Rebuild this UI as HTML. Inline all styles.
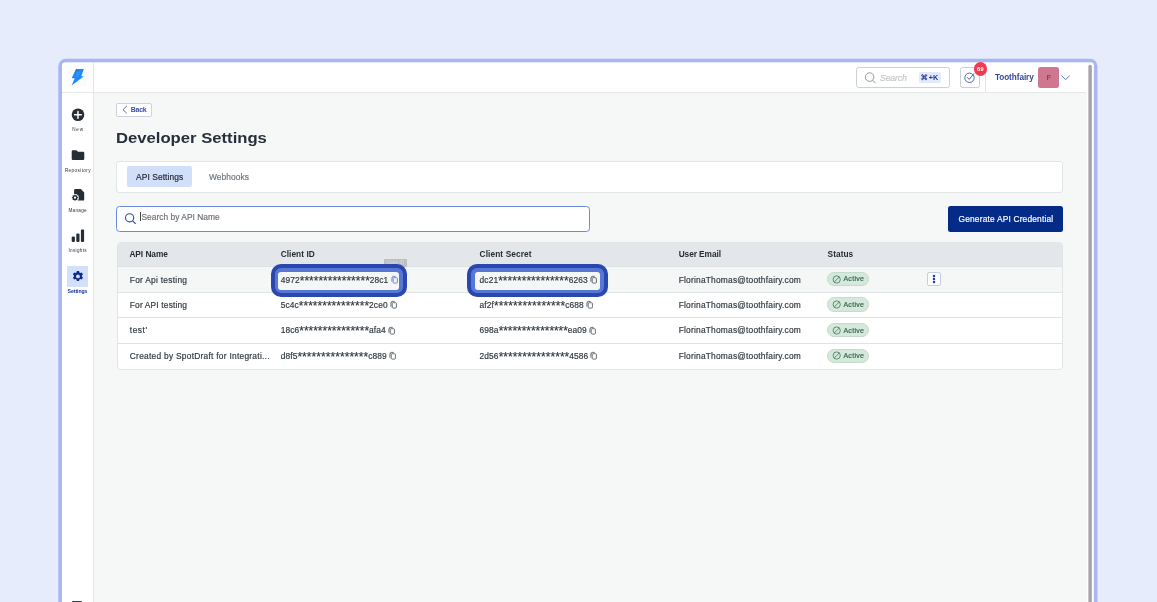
<!DOCTYPE html>
<html><head><meta charset="utf-8">
<style>
*{box-sizing:border-box;margin:0;padding:0}
html,body{width:1157px;height:602px;overflow:hidden}
body{background:#e7ecfc;font-family:"Liberation Sans",sans-serif;position:relative;color:#2a323a}
#app{position:absolute;left:0;top:0;width:1157px;height:602px;will-change:transform}
.b{position:absolute}
.t{position:absolute;white-space:nowrap;line-height:1;-webkit-text-stroke:0.18px currentColor}
svg{position:absolute;overflow:visible}
</style></head><body>
<svg style="left:0;top:0" width="1157" height="602" viewBox="0 0 1157 602"><path fill="#a8b8ec" fill-rule="evenodd" d="M58.3 610V66.3a7.5 7.5 0 0 1 7.5-7.5H1090a7.5 7.5 0 0 1 7.5 7.5V610z M62 610V66a3.4 3.4 0 0 1 3.4-3.4H1091.2a2.5 2.5 0 0 1 2.5 2.5V610z"/><path fill="#fff" d="M62 610V66a3.4 3.4 0 0 1 3.4-3.4H1091.2a2.5 2.5 0 0 1 2.5 2.5V610z"/></svg>
<div id="app">
<!-- content bg -->
<div class="b" style="left:94px;top:93px;width:993px;height:520px;background:#f6f8f8"></div>
<div class="b" style="left:93px;top:62px;width:1px;height:540px;background:#e3e6e7"></div>
<div class="b" style="left:62px;top:92px;width:1024px;height:1px;background:#e6e9ea"></div>
<!-- scrollbar -->
<svg style="left:0;top:0" width="1157" height="602" viewBox="0 0 1157 602"><rect x="1088.35" y="64.8" width="3.5" height="560" rx="1.75" fill="#a6a6a6"/></svg>

<!-- logo -->
<div class="b" style="left:68px;top:69px;width:19px;height:17px;background:#fbfbfc"></div>
<svg style="left:70px;top:68px" width="16" height="19" viewBox="70 68 16 19"><path d="M76.7 69.1 L83.9 69.1 L81.2 76.2 L83.9 76.2 L71.6 85.6 L74.8 78.3 L71.7 78.3 L75.3 70.4 Z" fill="#1889fd"/><path d="M75.3 70.4 L76.7 69.1 L76.9 70.6Z" fill="#1a4f93"/><path d="M76.9 72.3h3.6M76.2 74.3h3.7M75.6 76.2h3.4" stroke="#4ea6ff" stroke-width="0.7"/></svg>

<!-- sidebar: New -->
<svg style="left:71px;top:108px" width="14" height="14" viewBox="71 108 14 14"><circle cx="78" cy="114.8" r="6.3" fill="#262d35"/><path d="M78 111.4v6.8M74.6 114.8h6.8" stroke="#fff" stroke-width="1.5" stroke-linecap="round"/></svg>
<!-- Repository folder -->
<svg style="left:71px;top:149px" width="14" height="12" viewBox="71 149 14 12"><path d="M72.9 150.2h3.6l1.4 1.5h5.2a1.2 1.2 0 0 1 1.2 1.2v5.9a1.2 1.2 0 0 1-1.2 1.2h-10.2a1.2 1.2 0 0 1-1.2-1.2v-7.4a1.2 1.2 0 0 1 1.2-1.2z" fill="#262d35"/></svg>
<!-- Manage -->
<svg style="left:71px;top:188px" width="14" height="14" viewBox="71 188 14 14"><path d="M75.3 189h5.5l3.4 3.4v7a1.2 1.2 0 0 1-1.2 1.2h-7.7a1.2 1.2 0 0 1-1.2-1.2v-9.2a1.2 1.2 0 0 1 1.2-1.2z" fill="#262d35"/><g transform="translate(75 197.7)"><circle r="3.8" fill="#fff"/><path d="M0-3.4L0.9-2.2L2.4-2.4L2.2-0.9L3.4 0L2.2 0.9L2.4 2.4L0.9 2.2L0 3.4L-0.9 2.2L-2.4 2.4L-2.2 0.9L-3.4 0L-2.2-0.9L-2.4-2.4L-0.9-2.2Z" fill="#262d35"/><circle r="1.15" fill="#fff"/></g></svg>
<!-- Insights -->
<svg style="left:71px;top:229px" width="14" height="14" viewBox="71 229 14 14"><rect x="71.7" y="236.5" width="3.2" height="5.4" rx="1" fill="#262d35"/><rect x="76.3" y="233.4" width="3.2" height="8.5" rx="1" fill="#262d35"/><rect x="80.9" y="229.4" width="3.2" height="12.5" rx="1" fill="#262d35"/></svg>
<!-- Settings -->
<div class="b" style="left:67px;top:266.4px;width:21.3px;height:20.6px;background:#d4e0fb"></div>
<svg style="left:72px;top:270px" width="12" height="12" viewBox="-6 -6 12 12"><g transform="translate(-0.05 0.45)"><path id="gear" fill="#0b2a90" d="M-1.1-5.5h2.2l.35 1.5 1 .55 1.45-.5 1.1 1.9-1.1 1v1.1l1.1 1-1.1 1.9-1.45-.5-1 .55-.35 1.5h-2.2l-.35-1.5-1-.55-1.45.5-1.1-1.9 1.1-1v-1.1l-1.1-1 1.1-1.9 1.45.5 1-.55z"/><circle r="1.9" fill="#d4e0fb"/></g></svg>
<!-- bottom icon peek -->
<div class="b" style="left:71.5px;top:600.6px;width:10px;height:3px;background:#3a4148;border-radius:1px"></div>

<!-- topbar search -->
<div class="b" style="left:856px;top:67px;width:94px;height:21px;border:1px solid #ccd1d5;border-radius:2.5px;background:#fff"></div>
<svg style="left:864px;top:71px" width="14" height="14" viewBox="864 71 14 14"><circle cx="869.6" cy="77.1" r="4.3" fill="none" stroke="#878f96" stroke-width="0.9"/><path d="M872.7 80.3l2.6 2.6" stroke="#878f96" stroke-width="0.9" stroke-linecap="round"/></svg>
<div class="b" style="left:919px;top:71.5px;width:22px;height:11.8px;background:#e3eafc;border-radius:2px"></div>
<svg style="left:921px;top:74.4px" width="6.4" height="6.4" viewBox="0 0 12 12"><path d="M4.2 4.2h3.6v3.6h-3.6zM4.2 4.2H2.7A1.5 1.5 0 1 1 4.2 2.7zM7.8 4.2V2.7A1.5 1.5 0 1 1 9.3 4.2zM7.8 7.8h1.5A1.5 1.5 0 1 1 7.8 9.3zM4.2 7.8v1.5A1.5 1.5 0 1 1 2.7 7.8z" fill="none" stroke="#1f3590" stroke-width="1.75"/></svg>
<!-- notif -->
<div class="b" style="left:960px;top:67px;width:20px;height:21px;border:1px solid #c9ced3;border-radius:2.5px;background:#fff"></div>
<svg style="left:963px;top:71px" width="14" height="14" viewBox="963 71 14 14"><circle cx="969.5" cy="77.8" r="4.7" fill="none" stroke="#3f57a6" stroke-width="0.9"/><path d="M967.3 77.4l1.9 2 4.6-5.6" fill="none" stroke="#3f57a6" stroke-width="0.9" stroke-linecap="round" stroke-linejoin="round"/></svg>
<div class="b" style="left:985px;top:62px;width:1px;height:30px;background:#e3e6e8"></div>
<div class="b" style="left:973.5px;top:62.4px;width:13.4px;height:13.4px;border-radius:7px;background:#ef3b4f"></div>
<!-- avatar -->
<div class="b" style="left:1038.2px;top:67.1px;width:21px;height:20.5px;border-radius:2.5px;background:#cf7690"></div>
<svg style="left:1061px;top:74px" width="10" height="7" viewBox="1061 74 10 7"><path d="M1061.8 76l3.8 3.6 3.8-3.6" fill="none" stroke="#4a62b0" stroke-width="0.9" stroke-linecap="round" stroke-linejoin="round"/></svg>

<!-- back button -->
<div class="b" style="left:116.3px;top:103px;width:35.4px;height:13.5px;border:1px solid #ccd2e3;border-radius:2px;background:#fff"></div>
<svg style="left:122px;top:105px" width="6" height="9" viewBox="122 105 6 9"><path d="M126.6 106.2l-3.6 3.5 3.6 3.5" fill="none" stroke="#3a4fa0" stroke-width="0.8" stroke-linecap="round" stroke-linejoin="round"/></svg>

<!-- tabs -->
<div class="b" style="left:116.3px;top:160.7px;width:947px;height:32.2px;border:1px solid #e2e5e6;border-radius:3px;background:#fff"></div>
<div class="b" style="left:126.6px;top:166.2px;width:65.4px;height:20.7px;border-radius:2px;background:#d2dffb"></div>

<!-- search input -->
<div class="b" style="left:116.3px;top:205.8px;width:473.5px;height:25.8px;border:1px solid #6c8be0;border-radius:3.5px;background:#fff"></div>
<svg style="left:124px;top:212px" width="13" height="13" viewBox="124 212 13 13"><circle cx="129.6" cy="217.8" r="4.1" fill="none" stroke="#3550a4" stroke-width="1.1"/><path d="M132.6 220.9l2.7 2.6" stroke="#3550a4" stroke-width="1.1" stroke-linecap="round"/></svg>
<div class="b" style="left:140px;top:212.3px;width:0.8px;height:9px;background:#444"></div>

<!-- generate button -->
<div class="b" style="left:948.4px;top:205.8px;width:115px;height:26px;border-radius:2.5px;background:#042b88"></div>

<!-- table -->
<div class="b" style="left:116.8px;top:241.6px;width:946.4px;height:128.1px;border:1px solid #e2e5e6;border-radius:4px;background:#fff;overflow:hidden">
  <div class="b" style="left:0;top:0;width:946px;height:23.9px;background:#e4e7ea"></div>
  <div class="b" style="left:0;top:23.9px;width:946px;height:1px;background:#e0e3e6"></div>
  <div class="b" style="left:0;top:24.9px;width:946px;height:24.3px;background:#f5f7f7"></div>
  <div class="b" style="left:0;top:49.2px;width:946px;height:1px;background:#e0e3e5"></div>
  <div class="b" style="left:0;top:74.9px;width:946px;height:1px;background:#e0e3e5"></div>
  <div class="b" style="left:0;top:100.2px;width:946px;height:1px;background:#e0e3e5"></div>
</div>

<!-- tooltip remnant -->
<div class="b" style="left:384.1px;top:259.2px;width:23px;height:8px;background:#bbbfc2;border-radius:1px;overflow:hidden"><span class="t" style="left:2.4px;top:1.6px;font-size:4.6px;color:#d2d5d7;letter-spacing:0.2px">Copy ID</span></div>

<!-- highlight boxes -->
<div class="b" style="left:271.2px;top:263.9px;width:135.8px;height:32.9px;border:4.1px solid #2a47af;border-radius:10px;background:#5777d5"></div>
<div class="b" style="left:278.4px;top:271.9px;width:120.7px;height:17.8px;border-radius:3px;background:#f5f7f7"></div>
<div class="b" style="left:467.4px;top:263.9px;width:140.6px;height:32.9px;border:4.1px solid #2a47af;border-radius:10px;background:#5777d5"></div>
<div class="b" style="left:474.8px;top:271.9px;width:125.7px;height:17.8px;border-radius:3px;background:#f5f7f7"></div>

<!-- copy icons -->
<svg style="left:391.1px;top:275.9px" width="7" height="8" viewBox="0 0 7 8"><g fill="none" stroke="#5878d6" stroke-width="0.85"><path d="M1.4 1.9V1.1a.7.7 0 0 1 .7-.7h2.6"/><rect x="2.2" y="1.7" width="4.2" height="5.4" rx="0.9"/><path d="M0.9 1.5v4.2"/></g></svg>
<svg style="left:590.0px;top:275.9px" width="7" height="8" viewBox="0 0 7 8"><g fill="none" stroke="#4f575d" stroke-width="0.85"><path d="M1.4 1.9V1.1a.7.7 0 0 1 .7-.7h2.6"/><rect x="2.2" y="1.7" width="4.2" height="5.4" rx="0.9"/><path d="M0.9 1.5v4.2"/></g></svg>
<svg style="left:390.4px;top:301.2px" width="7" height="8" viewBox="0 0 7 8"><g fill="none" stroke="#4f575d" stroke-width="0.85"><path d="M1.4 1.9V1.1a.7.7 0 0 1 .7-.7h2.6"/><rect x="2.2" y="1.7" width="4.2" height="5.4" rx="0.9"/><path d="M0.9 1.5v4.2"/></g></svg>
<svg style="left:586.2px;top:301.2px" width="7" height="8" viewBox="0 0 7 8"><g fill="none" stroke="#4f575d" stroke-width="0.85"><path d="M1.4 1.9V1.1a.7.7 0 0 1 .7-.7h2.6"/><rect x="2.2" y="1.7" width="4.2" height="5.4" rx="0.9"/><path d="M0.9 1.5v4.2"/></g></svg>
<svg style="left:388.3px;top:326.8px" width="7" height="8" viewBox="0 0 7 8"><g fill="none" stroke="#4f575d" stroke-width="0.85"><path d="M1.4 1.9V1.1a.7.7 0 0 1 .7-.7h2.6"/><rect x="2.2" y="1.7" width="4.2" height="5.4" rx="0.9"/><path d="M0.9 1.5v4.2"/></g></svg>
<svg style="left:589.1px;top:326.8px" width="7" height="8" viewBox="0 0 7 8"><g fill="none" stroke="#4f575d" stroke-width="0.85"><path d="M1.4 1.9V1.1a.7.7 0 0 1 .7-.7h2.6"/><rect x="2.2" y="1.7" width="4.2" height="5.4" rx="0.9"/><path d="M0.9 1.5v4.2"/></g></svg>
<svg style="left:389.4px;top:352.4px" width="7" height="8" viewBox="0 0 7 8"><g fill="none" stroke="#4f575d" stroke-width="0.85"><path d="M1.4 1.9V1.1a.7.7 0 0 1 .7-.7h2.6"/><rect x="2.2" y="1.7" width="4.2" height="5.4" rx="0.9"/><path d="M0.9 1.5v4.2"/></g></svg>
<svg style="left:590.3px;top:352.4px" width="7" height="8" viewBox="0 0 7 8"><g fill="none" stroke="#4f575d" stroke-width="0.85"><path d="M1.4 1.9V1.1a.7.7 0 0 1 .7-.7h2.6"/><rect x="2.2" y="1.7" width="4.2" height="5.4" rx="0.9"/><path d="M0.9 1.5v4.2"/></g></svg>

<!-- status badges -->
<div class="b" style="left:827.1px;top:272.1px;width:42.3px;height:14.4px;border-radius:7.2px;background:#d4e8db;border:0.6px solid #c4dccb"></div>
<svg style="left:832px;top:275.0px" width="9" height="9" viewBox="-4.5 -4.5 9 9"><circle cx="0.2" cy="0" r="3.6" fill="none" stroke="#3b6a4e" stroke-width="0.75"/><path d="M-2.2 2.4L2.7-2.4" stroke="#3b6a4e" stroke-width="0.75"/></svg>
<div class="b" style="left:827.1px;top:297.3px;width:42.3px;height:14.4px;border-radius:7.2px;background:#d4e8db;border:0.6px solid #c4dccb"></div>
<svg style="left:832px;top:300.2px" width="9" height="9" viewBox="-4.5 -4.5 9 9"><circle cx="0.2" cy="0" r="3.6" fill="none" stroke="#3b6a4e" stroke-width="0.75"/><path d="M-2.2 2.4L2.7-2.4" stroke="#3b6a4e" stroke-width="0.75"/></svg>
<div class="b" style="left:827.1px;top:322.9px;width:42.3px;height:14.4px;border-radius:7.2px;background:#d4e8db;border:0.6px solid #c4dccb"></div>
<svg style="left:832px;top:325.8px" width="9" height="9" viewBox="-4.5 -4.5 9 9"><circle cx="0.2" cy="0" r="3.6" fill="none" stroke="#3b6a4e" stroke-width="0.75"/><path d="M-2.2 2.4L2.7-2.4" stroke="#3b6a4e" stroke-width="0.75"/></svg>
<div class="b" style="left:827.1px;top:348.5px;width:42.3px;height:14.4px;border-radius:7.2px;background:#d4e8db;border:0.6px solid #c4dccb"></div>
<svg style="left:832px;top:351.4px" width="9" height="9" viewBox="-4.5 -4.5 9 9"><circle cx="0.2" cy="0" r="3.6" fill="none" stroke="#3b6a4e" stroke-width="0.75"/><path d="M-2.2 2.4L2.7-2.4" stroke="#3b6a4e" stroke-width="0.75"/></svg>

<!-- kebab -->
<div class="b" style="left:926.7px;top:272.1px;width:14px;height:13.8px;border:1px solid #c8cee0;border-radius:2px;background:#fff"></div>

<span class="t" style="left:116.3px;top:131.05px;font-size:16px;font-weight:700;color:#27303a;-webkit-text-stroke:0;transform-origin:0 0;transform:scale(1.041,0.92)">Developer Settings</span>
<svg style="left:930px;top:273px" width="8" height="12" viewBox="930 273 8 12"><circle cx="934" cy="276.1" r="1.25" fill="#1f3aa0"/><circle cx="934" cy="279.05" r="1.25" fill="#1f3aa0"/><circle cx="934" cy="282" r="1.25" fill="#1f3aa0"/></svg>
<span class="t" style="left:880.00px;top:74.00px;font-size:8.8px;font-weight:400;color:#c2c7cb;letter-spacing:-0.215px;font-style:italic;">Search</span>
<span class="t" style="left:928.80px;top:74.00px;font-size:7.2px;font-weight:700;color:#1f3590;letter-spacing:0.009px;-webkit-text-stroke:0;">+K</span>
<span class="t" style="left:976.90px;top:67.00px;font-size:5.6px;font-weight:700;color:#ffffff;letter-spacing:0.466px;-webkit-text-stroke:0;">69</span>
<span class="t" style="left:994.90px;top:74.00px;font-size:8.2px;font-weight:700;color:#33489a;letter-spacing:-0.058px;-webkit-text-stroke:0;">Toothfairy</span>
<span class="t" style="left:1046.80px;top:74.00px;font-size:7px;font-weight:400;color:#7d3049;letter-spacing:0.000px;">F</span>
<span class="t" style="left:130.80px;top:106.00px;font-size:7px;font-weight:700;color:#3a4fa0;letter-spacing:-0.278px;-webkit-text-stroke:0;">Back</span>
<span class="t" style="left:136.10px;top:173.00px;font-size:8.4px;font-weight:400;color:#1f272e;letter-spacing:0.082px;">API Settings</span>
<span class="t" style="left:208.90px;top:173.00px;font-size:8.4px;font-weight:400;color:#6e757b;letter-spacing:0.083px;">Webhooks</span>
<span class="t" style="left:141.50px;top:213.00px;font-size:8.4px;font-weight:400;color:#6b7278;letter-spacing:0.026px;">Search by API Name</span>
<span class="t" style="left:958.50px;top:215.00px;font-size:8.4px;font-weight:400;color:#ffffff;letter-spacing:0.177px;">Generate API Credential</span>
<span class="t" style="left:129.40px;top:250.00px;font-size:8.3px;font-weight:700;color:#242b32;letter-spacing:-0.033px;-webkit-text-stroke:0;">API Name</span>
<span class="t" style="left:280.70px;top:250.00px;font-size:8.3px;font-weight:700;color:#242b32;letter-spacing:0.055px;-webkit-text-stroke:0;">Client ID</span>
<span class="t" style="left:479.60px;top:250.00px;font-size:8.3px;font-weight:700;color:#242b32;letter-spacing:0.097px;-webkit-text-stroke:0;">Client Secret</span>
<span class="t" style="left:678.70px;top:250.00px;font-size:8.3px;font-weight:700;color:#242b32;letter-spacing:-0.066px;-webkit-text-stroke:0;">User Email</span>
<span class="t" style="left:827.60px;top:250.00px;font-size:8.3px;font-weight:700;color:#242b32;letter-spacing:0.048px;-webkit-text-stroke:0;">Status</span>
<span class="t" style="left:129.80px;top:276.00px;font-size:8.4px;font-weight:400;color:#30383f;letter-spacing:0.261px;">For Api testing</span>
<span class="t" style="left:280.70px;top:276.00px;font-size:8.4px;font-weight:400;color:#30383f;"><span style="letter-spacing:0.100px">4972</span><span style="font-size:12.0px;line-height:0;position:relative;top:2.18px;letter-spacing:0.002px">***************</span><span style="letter-spacing:0.100px">28c1</span></span>
<span class="t" style="left:479.60px;top:276.00px;font-size:8.4px;font-weight:400;color:#30383f;"><span style="letter-spacing:0.100px">dc21</span><span style="font-size:12.0px;line-height:0;position:relative;top:2.18px;letter-spacing:0.035px">***************</span><span style="letter-spacing:0.100px">6263</span></span>
<span class="t" style="left:678.70px;top:276.00px;font-size:8.4px;font-weight:400;color:#30383f;letter-spacing:0.213px;">FlorinaThomas@toothfairy.com</span>
<span class="t" style="left:843.40px;top:275.00px;font-size:7px;font-weight:400;color:#35634a;letter-spacing:0.308px;">Active</span>
<span class="t" style="left:129.80px;top:301.00px;font-size:8.4px;font-weight:400;color:#30383f;letter-spacing:0.162px;">For API testing</span>
<span class="t" style="left:280.70px;top:301.00px;font-size:8.4px;font-weight:400;color:#30383f;"><span style="letter-spacing:0.100px">5c4c</span><span style="font-size:12.0px;line-height:0;position:relative;top:2.18px;letter-spacing:0.018px">***************</span><span style="letter-spacing:0.100px">2ce0</span></span>
<span class="t" style="left:479.60px;top:301.00px;font-size:8.4px;font-weight:400;color:#30383f;"><span style="letter-spacing:0.100px">af2f</span><span style="font-size:12.0px;line-height:0;position:relative;top:2.18px;letter-spacing:0.085px">***************</span><span style="letter-spacing:0.100px">c688</span></span>
<span class="t" style="left:678.70px;top:301.00px;font-size:8.4px;font-weight:400;color:#30383f;letter-spacing:0.213px;">FlorinaThomas@toothfairy.com</span>
<span class="t" style="left:843.40px;top:301.00px;font-size:7px;font-weight:400;color:#35634a;letter-spacing:0.308px;">Active</span>
<span class="t" style="left:129.80px;top:326.00px;font-size:8.4px;font-weight:400;color:#30383f;letter-spacing:0.523px;">test'</span>
<span class="t" style="left:280.70px;top:326.00px;font-size:8.4px;font-weight:400;color:#30383f;"><span style="letter-spacing:0.100px">18c6</span><span style="font-size:12.0px;line-height:0;position:relative;top:2.18px;letter-spacing:-0.016px">***************</span><span style="letter-spacing:0.100px">afa4</span></span>
<span class="t" style="left:479.60px;top:326.00px;font-size:8.4px;font-weight:400;color:#30383f;"><span style="letter-spacing:0.100px">698a</span><span style="font-size:12.0px;line-height:0;position:relative;top:2.18px;letter-spacing:-0.056px">***************</span><span style="letter-spacing:0.100px">ea09</span></span>
<span class="t" style="left:678.70px;top:326.00px;font-size:8.4px;font-weight:400;color:#30383f;letter-spacing:0.213px;">FlorinaThomas@toothfairy.com</span>
<span class="t" style="left:843.40px;top:327.00px;font-size:7px;font-weight:400;color:#35634a;letter-spacing:0.308px;">Active</span>
<span class="t" style="left:129.80px;top:352.00px;font-size:8.4px;font-weight:400;color:#30383f;letter-spacing:0.260px;">Created by SpotDraft for Integrati...</span>
<span class="t" style="left:280.70px;top:352.00px;font-size:8.4px;font-weight:400;color:#30383f;"><span style="letter-spacing:0.100px">d8f5</span><span style="font-size:12.0px;line-height:0;position:relative;top:2.18px;letter-spacing:0.057px">***************</span><span style="letter-spacing:0.100px">c889</span></span>
<span class="t" style="left:479.60px;top:352.00px;font-size:8.4px;font-weight:400;color:#30383f;"><span style="letter-spacing:0.100px">2d56</span><span style="font-size:12.0px;line-height:0;position:relative;top:2.18px;letter-spacing:0.044px">***************</span><span style="letter-spacing:0.100px">4586</span></span>
<span class="t" style="left:678.70px;top:352.00px;font-size:8.4px;font-weight:400;color:#30383f;letter-spacing:0.213px;">FlorinaThomas@toothfairy.com</span>
<span class="t" style="left:843.40px;top:352.00px;font-size:7px;font-weight:400;color:#35634a;letter-spacing:0.308px;">Active</span>
<span class="t" style="left:72.20px;top:128.00px;font-size:4.6px;font-weight:400;color:#2f363d;letter-spacing:0.798px;-webkit-text-stroke:0;">New</span>
<span class="t" style="left:64.90px;top:169.00px;font-size:4.6px;font-weight:400;color:#2f363d;letter-spacing:0.415px;-webkit-text-stroke:0;">Repository</span>
<span class="t" style="left:68.40px;top:209.00px;font-size:4.6px;font-weight:400;color:#2f363d;letter-spacing:0.318px;-webkit-text-stroke:0;">Manage</span>
<span class="t" style="left:68.40px;top:249.00px;font-size:4.6px;font-weight:400;color:#2f363d;letter-spacing:0.337px;-webkit-text-stroke:0;">Insights</span>
<span class="t" style="left:67.60px;top:289.00px;font-size:5.2px;font-weight:700;color:#12309a;letter-spacing:-0.081px;-webkit-text-stroke:0;">Settings</span>
</div>
</body></html>
